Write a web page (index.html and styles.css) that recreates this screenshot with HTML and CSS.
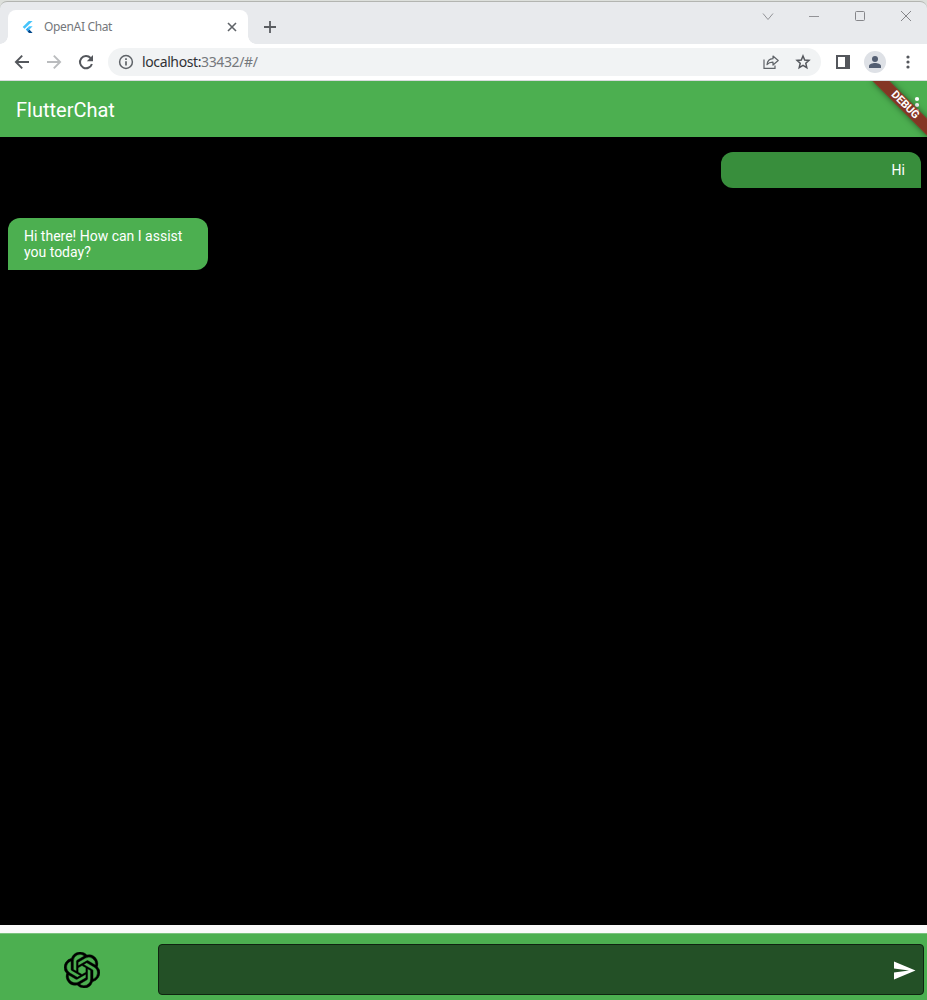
FILE: index.html
```
<!DOCTYPE html>
<html lang="en">
<head>
<meta charset="utf-8">
<title>OpenAI Chat</title>
<link rel="stylesheet" href="styles.css">
</head>
<body>
<div class="window">
  <div class="tabstrip">
    <div class="tab">
      <svg class="favicon" width="12" height="12" viewBox="0 0 12 12"><path d="M6.8 0H10.6L2.6 7.7L.7 6Z" fill="#45c4fa"/><path d="M7 5.2H10.6L7.4 8.6L5.5 6.9Z" fill="#40c4ff"/><path d="M3.8 8.6L5.6 6.8L7.4 8.6L5.6 10.4Z" fill="#29a6f6"/><path d="M5.6 10.4L7.4 8.6L10.6 12H7Z" fill="#01478b"/></svg>
      <span class="tab-title">OpenAI Chat</span>
      <svg class="tab-close" width="10" height="10" viewBox="0 0 10 10"><path d="M1 1L9 9M9 1L1 9" stroke="#5f6368" stroke-width="1.6"/></svg>
    </div>
    <svg class="newtab" width="12" height="12" viewBox="0 0 12 12"><path d="M6 0V12M0 6H12" stroke="#5a5d61" stroke-width="1.8"/></svg>
    <div class="controls">
      <svg width="46" height="30" viewBox="0 0 46 30" fill="none" stroke="#929397"><path d="M18 12.5L23 18.5L28 12.5"/></svg>
      <svg width="46" height="30" viewBox="0 0 46 30" fill="none" stroke="#929397"><path d="M18 15.5H28"/></svg>
      <svg width="46" height="30" viewBox="0 0 46 30" fill="none" stroke="#85868a"><rect x="18.5" y="10.5" width="9" height="9" rx="1"/></svg>
      <svg width="46" height="30" viewBox="0 0 46 30" fill="none" stroke="#85868a"><path d="M18 10L28 20M28 10L18 20"/></svg>
    </div>
  </div>
  <div class="toolbar">
    <div class="nav">
      <svg width="16" height="16" viewBox="0 0 16 16" fill="none" stroke="#54575c" stroke-width="1.9"><path d="M15 8H2M8.2 1.7L1.9 8L8.2 14.3"/></svg>
      <svg width="16" height="16" viewBox="0 0 16 16" fill="none" stroke="#babcbe" stroke-width="1.9"><path d="M1 8H14M7.8 1.7L14.1 8L7.8 14.3"/></svg>
      <svg width="16" height="16" viewBox="0 0 16 16"><path d="M13.9 10A6.1 6.1 0 1 1 12.6 4" fill="none" stroke="#54575c" stroke-width="2"/><path d="M15 1V7.2H8.8Z" fill="#54575c"/></svg>
    </div>
    <div class="address">
      <svg width="16" height="16" viewBox="0 0 16 16"><circle cx="8" cy="8" r="6.4" fill="none" stroke="#5f6368" stroke-width="1.5"/><path d="M8 7.2V11.4M8 4.3V5.9" stroke="#5f6368" stroke-width="1.7"/></svg>
      <span class="url">localhost:<span class="path">33432/#/</span></span>
      <svg class="share" width="16" height="16" viewBox="0 0 16 16" fill="none" stroke="#5f6368" stroke-width="1.2"><path d="M1 5.5V14.4H12V11.5"/><path d="M4 10.7C4.4 6.8 6.2 5 10 4.7V2L15.2 6.5L10 11V8.2C7.2 8.1 5.6 8.8 4 10.7Z" stroke-linejoin="round"/></svg>
      <svg width="16" height="16" viewBox="0 0 16 16"><path d="M8 2L9.7 6L14 6.4L10.8 9.3L11.8 13.6L8 11.3L4.2 13.6L5.2 9.3L2 6.4L6.3 6Z" fill="none" stroke="#54575c" stroke-width="1.5"/></svg>
    </div>
    <svg class="panel" width="14" height="14" viewBox="0 0 14 14"><path d="M1 1H13V13H1Z" fill="none" stroke="#54575c" stroke-width="2"/><path d="M9 0H14V14H9Z" fill="#54575c"/></svg>
    <div class="avatar"><svg width="14" height="14" viewBox="0 0 14 14" fill="#535e72"><circle cx="7" cy="4" r="3"/><path d="M1 13V11C1 9 4.5 8 7 8S13 9 13 11V13Z"/></svg></div>
    <svg class="menu" width="4" height="14" viewBox="0 0 4 14" fill="#54575c"><circle cx="2" cy="2" r="1.6"/><circle cx="2" cy="7" r="1.6"/><circle cx="2" cy="12" r="1.6"/></svg>
  </div>
  <header class="appbar">
    <h1>FlutterChat</h1>
    <svg class="more" width="6" height="18" viewBox="0 0 6 18" fill="#fff"><circle cx="3" cy="3" r="2.1"/><circle cx="3" cy="9" r="2.1"/><circle cx="3" cy="15" r="2.1"/></svg>
    <div class="banner">DEBUG</div>
  </header>
  <main class="messages">
    <div class="bubble sent">Hi</div>
    <div class="bubble received">Hi there! How can I assist you today?</div>
  </main>
  <footer class="composer">
    <div class="logo"><svg width="36" height="36" viewBox="0 0 24 24"><path d="M22.2819 9.8211a5.9847 5.9847 0 0 0-.5157-4.9108 6.0462 6.0462 0 0 0-6.5098-2.9A6.0651 6.0651 0 0 0 4.9807 4.1818a5.9847 5.9847 0 0 0-3.9977 2.9 6.0462 6.0462 0 0 0 .7427 7.0966 5.98 5.98 0 0 0 .511 4.9107 6.051 6.051 0 0 0 6.5146 2.9001A5.9847 5.9847 0 0 0 13.2599 24a6.0557 6.0557 0 0 0 5.7718-4.2058 5.9894 5.9894 0 0 0 3.9977-2.9001 6.0557 6.0557 0 0 0-.7475-7.0729zm-9.022 12.6081a4.4755 4.4755 0 0 1-2.8764-1.0408l.1419-.0804 4.7783-2.7582a.7948.7948 0 0 0 .3927-.6813v-6.7369l2.02 1.1686a.071.071 0 0 1 .038.052v5.5826a4.504 4.504 0 0 1-4.4945 4.4944zm-9.6607-4.1254a4.4708 4.4708 0 0 1-.5346-3.0137l.142.0852 4.783 2.7582a.7712.7712 0 0 0 .7806 0l5.8428-3.3685v2.3324a.0804.0804 0 0 1-.0332.0615L9.74 19.9502a4.4992 4.4992 0 0 1-6.1408-1.6464zM2.3408 7.8956a4.485 4.485 0 0 1 2.3655-1.9728V11.6a.7664.7664 0 0 0 .3879.6765l5.8144 3.3543-2.0201 1.1685a.0757.0757 0 0 1-.071 0l-4.8303-2.7865A4.504 4.504 0 0 1 2.3408 7.872zm16.5963 3.8558L13.1038 8.364 15.1192 7.2a.0757.0757 0 0 1 .071 0l4.8303 2.7913a4.4944 4.4944 0 0 1-.6765 8.1042v-5.6772a.79.79 0 0 0-.407-.667zm2.0107-3.0231l-.142-.0852-4.7735-2.7818a.7759.7759 0 0 0-.7854 0L9.409 9.2297V6.8974a.0662.0662 0 0 1 .0284-.0615l4.8303-2.7866a4.4992 4.4992 0 0 1 6.6802 4.66zM8.3065 12.863l-2.02-1.1638a.0804.0804 0 0 1-.038-.0567V6.0742a4.4992 4.4992 0 0 1 7.3757-3.4537l-.142.0805L8.704 5.459a.7948.7948 0 0 0-.3927.6813zm1.0976-2.3654l2.602-1.4998 2.6069 1.4998v2.9994l-2.5974 1.4997-2.6067-1.4997Z" stroke="#000" stroke-width=".3"/></svg></div>
    <div class="input"><svg width="22" height="19" viewBox="0 0 22 19"><path d="M0 .5L21.5 9.5L0 18.5V11.5L15 9.5L0 7.5Z" fill="#fff"/></svg></div>
  </footer>
</div>
</body>
</html>
```
FILE: styles.css
```
* { box-sizing: border-box; }
body { margin: 0; background: #dde0dc; font-family: Roboto, sans-serif; }
svg { display: block; flex: none; }
.window { width: 927px; height: 1000px; display: flex; flex-direction: column; overflow: hidden; }
.tabstrip { height: 43px; flex: none; display: flex; background: #e8eaed; border-top: 1px solid #b3b5b1; margin-top: 1px; border-radius: 7px 7px 0 0; padding-left: 8px; }
.tab { position: relative; margin-top: 8px; width: 240px; height: 34px; background: #fff; border-radius: 8px 8px 0 0; display: flex; align-items: center; padding: 0 11px 0 14px; }
.tab::before, .tab::after { content: ""; position: absolute; bottom: 0; width: 8px; height: 8px; }
.tab::before { left: -8px; background: radial-gradient(circle at 0 0, transparent 7.5px, #fff 8px); }
.tab::after { right: -8px; background: radial-gradient(circle at 100% 0, transparent 7.5px, #fff 8px); }
.tab-title { margin-left: 10px; font: 12px/16px "Noto Sans", sans-serif; letter-spacing: -.34px; color: #74777b; flex: 1; }
.newtab { margin: 19px 0 0 16px; }
.controls { margin: -1px -2px 0 auto; display: flex; }
.toolbar { height: 37px; flex: none; display: flex; align-items: center; background: #fff; border-bottom: 1px solid #d9dbdd; padding-left: 14px; }
.nav { display: flex; gap: 16px; }
.address { margin-left: 14px; width: 713px; height: 28px; border-radius: 14px; background: #f1f3f4; display: flex; align-items: center; padding: 0 10px; }
.url { margin-left: 8px; flex: 1; font: 14px/20px "Noto Sans", sans-serif; letter-spacing: -.38px; color: #303134; }
.path { color: #75787c; }
.share { margin-right: 16px; }
.panel { margin-left: 15px; }
.avatar { margin-left: 14px; width: 22px; height: 22px; border-radius: 50%; background: #dee1e6; display: flex; align-items: center; justify-content: center; }
.menu { margin-left: 20px; }
.appbar { position: relative; height: 56px; flex: none; background: #4caf50; overflow: hidden; display: flex; align-items: center; padding-left: 16px; }
.appbar h1 { margin: 0; font-size: 20px; font-weight: 400; line-height: 24px; color: #fff; padding-top: 2px; }
.more { position: absolute; left: 914px; top: 15px; }
.banner { position: absolute; left: 864.5px; top: 17.5px; width: 80px; height: 12px; transform: rotate(45deg); background: rgba(153,10,20,.73); box-shadow: 0 0 6px rgba(0,0,0,.5); color: #fff; font-size: 11px; font-weight: 700; letter-spacing: -.15px; line-height: 12px; text-align: center; }
.messages { height: 788px; flex: none; background: #000; padding: 15px 6px 0 8px; display: flex; flex-direction: column; align-items: flex-start; gap: 30px; }
.bubble { width: 200px; padding: 10px 16px; font-size: 14px; line-height: 16px; color: #fff; }
.sent { align-self: flex-end; text-align: right; background: #388e3c; border-radius: 12px 12px 0 12px; }
.received { background: #4caf50; border-radius: 12px 12px 12px 0; }
.composer { height: 75px; flex: none; background: #4caf50; border-top: 8px solid #fafafa; box-shadow: inset 0 1px #7bc37e; display: flex; padding: 11px 3px 5px 0; }
.logo { width: 158px; padding: 7.5px 0 0 64px; }
.input { flex: 1; height: 51px; background: #235026; border: 1px solid #0f2310; border-radius: 4px; display: flex; align-items: center; justify-content: flex-end; padding: 1px 7px 0 0; }
```
